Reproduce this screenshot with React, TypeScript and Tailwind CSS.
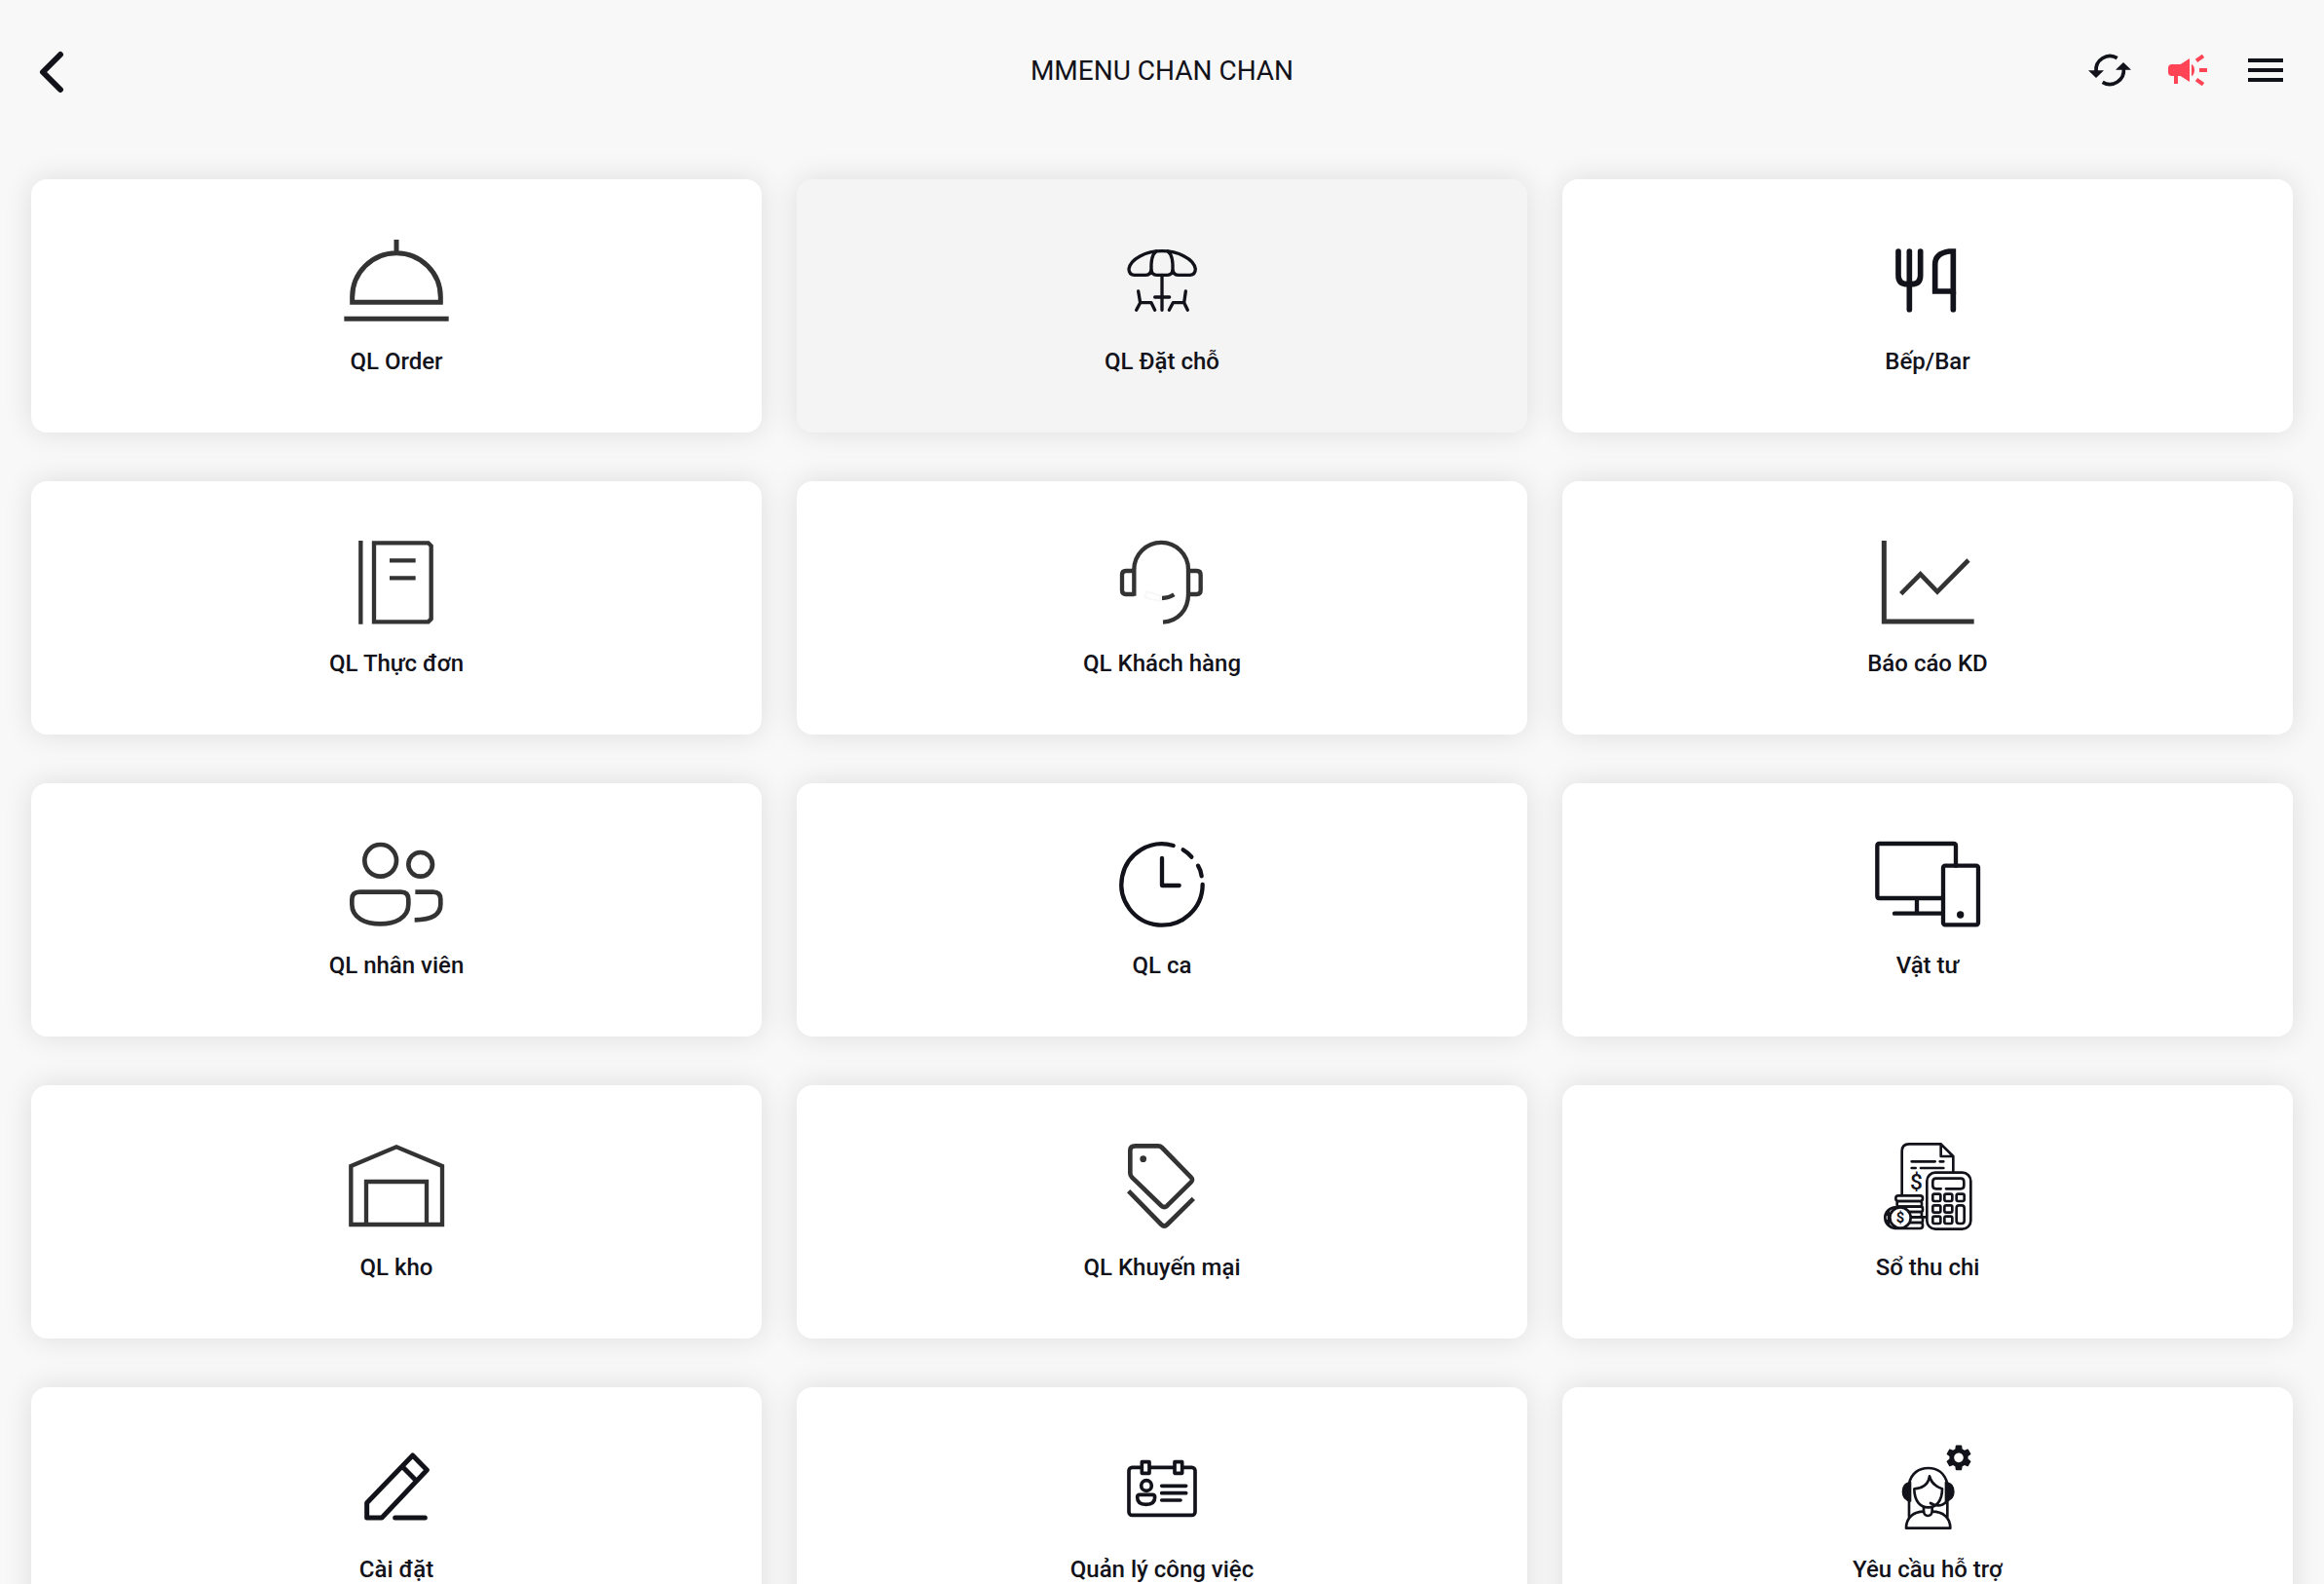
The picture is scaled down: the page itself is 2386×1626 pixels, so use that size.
import type { ReactNode } from "react";
import { MdMenu, MdSettings } from "react-icons/md";

type IconProps = {
    origin: string;
    width?: number;
    gray?: boolean;
    round?: boolean;
    children: ReactNode;
};

// every tile icon is drawn on a 336x288 sheet, origin is its top left corner
function TileIcon({ origin, width = 13, gray, round, children }: IconProps) {
    return (
        <svg
            viewBox={`${origin} 336 288`}
            fill="none"
            stroke="currentColor"
            strokeWidth={width}
            strokeLinecap={round ? "round" : "butt"}
            strokeLinejoin={round ? "round" : "miter"}
            className={`h-24 w-28 ${gray ? "text-[#333333]" : "text-[#12121a]"}`}
            aria-hidden="true"
        >
            {children}
        </svg>
    );
}

const tiles: { label: string; active?: boolean; icon: ReactNode }[] = [
    {
        label: "QL Order",
        icon: (
            <TileIcon origin="1053 720" width={15} gray>
                <path d="M1221 738V775M1085 931V915A136 136 0 0 1 1357 915V931ZM1060 982H1382" />
            </TileIcon>
        ),
    },
    {
        label: "QL Đặt chỗ",
        active: true,
        icon: (
            <TileIcon origin="291 660" width={10} round>
                <path d="M373 787Q357 785 357 768C362 737 410 713 459 713S557 737 562 768Q562 785 546 787H510Q495 787 492 772Q490 787 476 787H442Q428 787 426 772Q423 787 408 787H373" />
                <path d="M426 772C425 745 429 722 441 714M492 772C493 745 489 722 477 714" />
                <path d="M459 787V895M437 855H482" />
                <path d="M386 837L392 872H426L437 895M392 872L380 895M532 837L527 872H493L481 895M527 872L538 895" />
            </TileIcon>
        ),
    },
    {
        label: "Bếp/Bar",
        icon: (
            <TileIcon origin="189 30" width={17}>
                <path strokeLinecap="round" d="M267 84V158Q267 185 295 185H307Q335 185 335 158V84M301 84V263M436 210V263" />
                <path d="M436 216V84H424Q380 90 380 124V207H436" />
            </TileIcon>
        ),
    },
    {
        label: "QL Thực đơn",
        icon: (
            <TileIcon origin="123 60" gray>
                <path d="M181 75V332M222 82H389L398 91V316L389 325H222ZM270 136H350M270 190H350" />
            </TileIcon>
        ),
    },
    {
        label: "QL Khách hàng",
        icon: (
            <TileIcon origin="111 60" gray>
                <path d="M193 245V164A83 83 0 0 1 360 164V240C360 290 326 324 282 326" />
                <path d="M193 168H168Q156 168 156 180V228Q156 240 168 240H193M360 168H386Q398 168 398 180V228Q398 240 386 240H360" />
                <path d="M279 252Q300 252 316 241" />
                <path stroke="#f8f8f8" strokeWidth="6" d="M232 232L274 244V260Q250 260 226 248Z" />
            </TileIcon>
        ),
    },
    {
        label: "Báo cáo KD",
        icon: (
            <TileIcon origin="129 60" width={15} gray>
                <path d="M163 75V324H440" />
                <path strokeWidth="14" d="M215 239L275 178L327 232L423 135" />
            </TileIcon>
        ),
    },
    {
        label: "QL nhân viên",
        icon: (
            <TileIcon origin="123 60" width={14} gray>
                <circle cx="242" cy="130" r="49" />
                <circle cx="365" cy="142" r="37" />
                <path d="M178 227H305Q328 227 328 250V265C328 308 285 325 241 325S154 308 154 265V250Q154 227 178 227Z" />
                <path d="M349 227H404Q427 227 427 250V265C427 300 395 313 347 313" />
            </TileIcon>
        ),
    },
    {
        label: "QL ca",
        icon: (
            <TileIcon origin="111 990" round>
                <path d="M314 1014A125 125 0 1 0 404 1134M344 1027Q360 1036 370 1049M390 1076Q399 1090 401 1108M279 1053V1137H332" />
            </TileIcon>
        ),
    },
    {
        label: "Vật tư",
        icon: (
            <TileIcon origin="129 990" round>
                <path d="M345 1176H149Q142 1176 142 1169V1015Q142 1008 149 1008H377Q384 1008 384 1015V1076M264 1176V1223M195 1223H338" />
                <rect x="345" y="1076" width="108" height="182" rx="6" />
                <circle cx="398" cy="1227" r="11" fill="currentColor" stroke="none" />
            </TileIcon>
        ),
    },
    {
        label: "QL kho",
        icon: (
            <TileIcon origin="123 60" gray>
                <path d="M151 141L291 82L432 141V321H151ZM198 321V189H384V321" />
            </TileIcon>
        ),
    },
    {
        label: "QL Khuyến mại",
        icon: (
            <TileIcon origin="171 60" width={14} gray>
                <path d="M257 79H327Q334 79 339 84L428 175Q436 183 428 191L355 263Q346 271 337 263L246 175Q241 170 241 162V93Q241 79 257 79Z" />
                <path d="M236 218L337 321Q346 330 355 321L436 241" />
                <circle cx="281" cy="119" r="10" fill="currentColor" stroke="none" />
            </TileIcon>
        ),
    },
    {
        label: "Sổ thu chi",
        icon: (
            <TileIcon origin="129 60" width={8} round>
                <path d="M218 230V95Q218 73 240 73H338L376 111V158M338 73V111H376" />
                <path d="M248 127H320M335 127H346M248 147H260M276 147H346" />
                <text x="262" y="214" fontSize="68" fontWeight="500" textAnchor="middle" fill="currentColor" stroke="none" className="font-[Roboto,sans-serif]">$</text>
                <rect x="295" y="161" width="135" height="174" rx="26" />
                <path d="M338 211H323Q313 211 313 201V189Q313 179 323 179H399Q409 179 409 189V201Q409 211 399 211H354" />
                <rect x="313" y="227" width="24" height="22" rx="5" />
                <rect x="349" y="227" width="24" height="22" rx="5" />
                <rect x="386" y="227" width="24" height="22" rx="5" />
                <rect x="313" y="262" width="24" height="22" rx="5" />
                <rect x="349" y="262" width="24" height="22" rx="5" />
                <rect x="313" y="296" width="24" height="22" rx="5" />
                <rect x="349" y="296" width="24" height="22" rx="5" />
                <rect x="386" y="262" width="24" height="56" rx="8" />
                <rect x="199" y="232" width="83" height="17" rx="8" />
                <rect x="203" y="249" width="76" height="17" rx="6" />
                <rect x="203" y="266" width="79" height="16" rx="6" />
                <rect x="206" y="282" width="73" height="16" rx="6" />
                <rect x="206" y="298" width="76" height="17" rx="6" />
                <rect x="190" y="315" width="92" height="18" rx="8" />
                <path d="M282 298H293" />
                <circle cx="198" cy="300" r="32" fill="white" />
                <path d="M168 290H181M168 310H181M177 278V322" />
                <circle cx="213" cy="300" r="32" fill="white" />
                <text x="213" y="315" fontSize="44" fontWeight="700" textAnchor="middle" fill="currentColor" stroke="none" className="font-[Roboto,sans-serif]">$</text>
            </TileIcon>
        ),
    },
    {
        label: "Cài đặt",
        icon: (
            <TileIcon origin="123 990" width={15} round>
                <path d="M200 1224V1178L341 1032L385 1077L246 1224ZM310 1067L350 1108M287 1224H379" />
            </TileIcon>
        ),
    },
    {
        label: "Quản lý công việc",
        icon: (
            <TileIcon origin="171 990" width={11} round>
                <rect x="237" y="1069" width="204" height="147" rx="10" />
                <rect x="277" y="1052" width="23" height="35" fill="white" />
                <rect x="378" y="1052" width="23" height="35" fill="white" />
                <circle cx="291" cy="1125" r="16" />
                <path d="M270 1153H310Q317 1153 317 1161C317 1178 306 1183 290 1183S263 1178 263 1161Q263 1153 270 1153ZM338 1126H413M338 1148H413M338 1170H396" />
            </TileIcon>
        ),
    },
    {
        label: "Yêu cầu hỗ trợ",
        icon: (
            <TileIcon origin="129 60" width={8} round>
                <MdSettings x={345} y={61} size={96} stroke="none" />
                <path d="M240 190C246 156 272 141 299 141S350 156 358 190M240 240V291M358 240V291" />
                <path fill="currentColor" strokeWidth="4" d="M245 184V243Q220 240 220 214T245 184ZM352 184V243Q378 240 378 214T352 184Z" />
                <path d="M256 205C285 203 300 188 303 166C308 186 322 198 342 205C342 245 322 262 299 262S256 245 256 205Z" />
                <path d="M306 249Q334 266 356 244M285 263V275Q287 288 298 288T311 275V263" />
                <path d="M285 275C255 275 231 292 231 326H367C367 292 343 275 312 275" />
            </TileIcon>
        ),
    },
];

function Header() {
    return (
        <header className="grid h-36 grid-cols-[1fr_auto_1fr] items-center px-9">
            <button type="button" aria-label="Quay lại" className="justify-self-start">
                <svg viewBox="108 144 144 144" fill="none" stroke="currentColor" strokeWidth="18" strokeLinecap="round" strokeLinejoin="round" className="size-12">
                    <path d="M186 168L132 222L186 276" />
                </svg>
            </button>

            <h1 className="pt-0.5 text-[28px] leading-9">MMENU CHAN CHAN</h1>

            <div className="flex items-center gap-8 justify-self-end">
                <button type="button" aria-label="Đồng bộ">
                    <svg viewBox="186 54 144 144" className="size-12">
                        <path fill="none" stroke="currentColor" strokeWidth="11" d="M281 89A43 43 0 0 0 216 130M236 163A43 43 0 0 0 301 122" />
                        <path fill="currentColor" d="M192 127H240L216 150ZM276 125H324L300 102Z" />
                    </svg>
                </button>
                <button type="button" aria-label="Thông báo">
                    <svg viewBox="426 54 144 144" className="size-12 text-[#ff4455]">
                        <path fill="currentColor" d="M450 108H476L504 90V162L476 144H468V168H456V144H450Q438 144 438 132V120Q438 108 450 108ZM510 107Q519 113 519 126T510 145Z" />
                        <path stroke="currentColor" strokeWidth="12" d="M525 97L546 82M534 126H558M525 155L546 170" />
                    </svg>
                </button>
                <button type="button" aria-label="Menu">
                    <MdMenu className="size-12" />
                </button>
            </div>
        </header>
    );
}

export default function App() {
    return (
        <div className="h-screen overflow-y-auto bg-[#f8f8f8] font-[Roboto,sans-serif] text-[#12121a] [scrollbar-width:none]">
            <Header />
            <main className="grid grid-cols-3 gap-x-9 gap-y-[50px] px-8 pt-10 pb-12">
                {tiles.map((tile) => (
                    <button
                        key={tile.label}
                        type="button"
                        className={`flex flex-col items-center gap-4 rounded-2xl pt-14 pb-[54px] shadow-[0_0_30px_rgba(0,0,0,0.11)] ${
                            tile.active ? "bg-[#f4f4f4]" : "bg-white hover:bg-[#f4f4f4]"
                        }`}
                    >
                        {tile.icon}
                        <span className="text-2xl leading-[38px] font-medium">{tile.label}</span>
                    </button>
                ))}
            </main>
        </div>
    );
}
